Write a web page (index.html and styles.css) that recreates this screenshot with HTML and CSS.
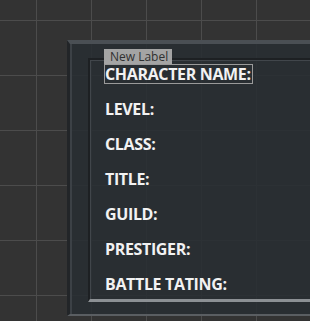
FILE: index.html
```html
<!DOCTYPE html>
<html lang="en">
<head>
    <meta charset="UTF-8">
    <title>Character Sheet</title>
    <link rel="stylesheet" href="styles.css">
</head>
<body>
    <div class="panel">
        <div class="frame">
            <div class="row selected">
                <span class="tag">New Label</span>
                CHARACTER NAME:
            </div>
            <div class="row">LEVEL:</div>
            <div class="row">CLASS:</div>
            <div class="row">TITLE:</div>
            <div class="row">GUILD:</div>
            <div class="row">PRESTIGER:</div>
            <div class="row">BATTLE TATING:</div>
        </div>
    </div>
</body>
</html>
```

FILE: styles.css
```css
body {
    margin: 0;
    padding: 0;
    overflow: hidden;
    font-family: "Open Sans", "DejaVu Sans", sans-serif;
    background-color: #333333;
    background-image:
        linear-gradient(to right, #4c4c4c 1px, transparent 1px),
        linear-gradient(to bottom, #4c4c4c 1px, transparent 1px);
    background-size: 55px 55px;
    background-position: 36px 20px;
}

.panel {
    width: 243px;
    height: 276px;
    margin: 40px 0 0 67px;
    box-sizing: border-box;
    padding: 14px 0 12px 18px;
    border-top: 4px solid #4a4f54;
    border-left: 3px solid #222528;
    border-bottom: 2px solid #5a5e62;
    background-color: rgba(40, 45, 50, 0.86);
    box-shadow: inset 2px 0 0 #3c4146;
}

.frame {
    height: 100%;
    box-sizing: border-box;
    padding: 4px 0 0 15px;
    border-top: 2px solid #1d2023;
    border-left: 2px solid #1d2023;
    border-bottom: 3px solid #8c9094;
    box-shadow: inset 1px 1px 0 #41464b;
    display: flex;
    flex-direction: column;
    gap: 15px;
}

.row {
    position: relative;
    height: 20px;
    line-height: 20px;
    font-size: 16px;
    font-weight: 700;
    color: #f2f2f2;
    letter-spacing: -0.35px;
    white-space: nowrap;
}

.row.selected {
    align-self: flex-start;
    margin-left: -1px;
    padding: 0 1px 0 0;
    border: 1px solid #9a9a9a;
    height: 18px;
    line-height: 18px;
}

.tag {
    position: absolute;
    left: -1px;
    top: -16px;
    width: 68px;
    height: 15px;
    line-height: 15px;
    padding-left: 6px;
    box-sizing: border-box;
    background-color: #a4a4a4;
    color: #303030;
    font-size: 12px;
    font-weight: 400;
    letter-spacing: 0;
}
```
